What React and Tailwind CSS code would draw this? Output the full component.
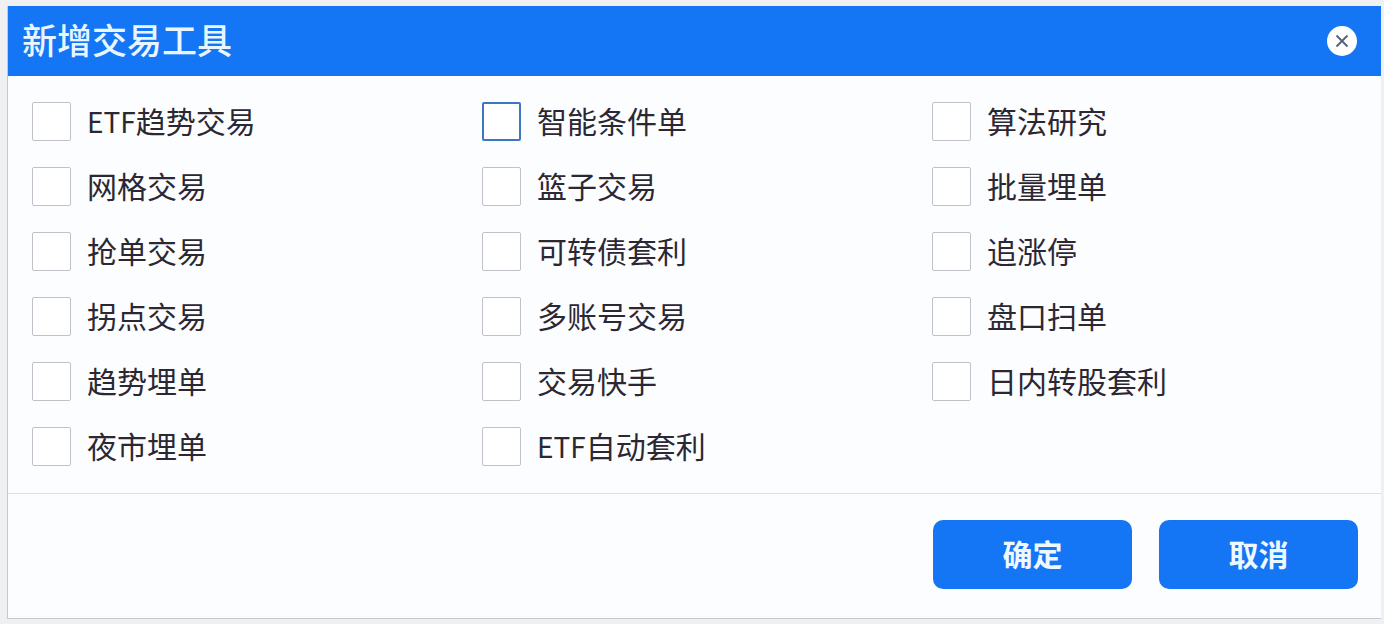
const rows = [
  [["ETF", "趋势交易"], "智能条件单", "算法研究"],
  ["网格交易", "篮子交易", "批量埋单"],
  ["抢单交易", "可转债套利", "追涨停"],
  ["拐点交易", "多账号交易", "盘口扫单"],
  ["趋势埋单", "交易快手", "日内转股套利"],
  ["夜市埋单", ["ETF", "自动套利"], ""],
];

function Option({ label, focused }) {
  if (!label) return <div />;
  const text = Array.isArray(label) ? (
    <>
      <span className="text-[28px]">{label[0]}</span>
      {label[1]}
    </>
  ) : (
    label
  );
  return (
    <label className="flex items-center gap-4 h-[65px]">
      <span
        className={
          focused
            ? "w-[39px] h-[39px] rounded-[2px] bg-white border-2 border-[#3b78c4]"
            : "w-[39px] h-[39px] rounded-[2px] bg-white border border-[#bfc3c9]"
        }
      />
      <span className="text-[30px] leading-none text-[#2c2833] pb-1">{text}</span>
    </label>
  );
}

export default function App() {
  return (
    <div
      className="w-[1384px] h-[624px] overflow-hidden bg-[#eef0f2] pt-[6px] pl-[7px] pr-[3px] pb-[5px]"
      style={{ fontFamily: '"Noto Sans CJK SC", "Liberation Sans", sans-serif' }}
    >
      <div className="h-full flex flex-col bg-[#fcfdfe] border-l border-b border-[#c6cad0]">
        <div className="h-[70px] shrink-0 flex items-center justify-between bg-[#1475f5] pl-[14px] pr-[24px]">
          <h1 className="text-[35px] leading-none font-medium text-[#e8f6ff] pb-[6px]">新增交易工具</h1>
          <button className="w-[30px] h-[30px] rounded-full bg-white flex items-center justify-center">
            <svg width="16" height="16" viewBox="0 0 16 16" fill="none" stroke="#50607a" strokeWidth="1.8">
              <path d="M2.5 2.5l11 11M13.5 2.5l-11 11" />
            </svg>
          </button>
        </div>
        <div className="h-[418px] shrink-0 pt-[13px] pl-[24px] border-b border-[#dcdfe4]">
          <div className="grid grid-cols-[450px_450px_1fr]">
            {rows.flatMap((row, r) =>
              row.map((label, c) => <Option key={`${r}-${c}`} label={label} focused={r === 0 && c === 1} />)
            )}
          </div>
        </div>
        <div className="flex-1 flex justify-end gap-[27px] pt-[26px] pr-[23px]">
          <button className="w-[199px] h-[69px] rounded-[10px] bg-[#1475f5] text-[30px] font-bold text-[#eef8ff] pb-[2px]">确定</button>
          <button className="w-[199px] h-[69px] rounded-[10px] bg-[#1475f5] text-[30px] font-bold text-[#eef8ff] pb-[2px]">取消</button>
        </div>
      </div>
    </div>
  );
}
